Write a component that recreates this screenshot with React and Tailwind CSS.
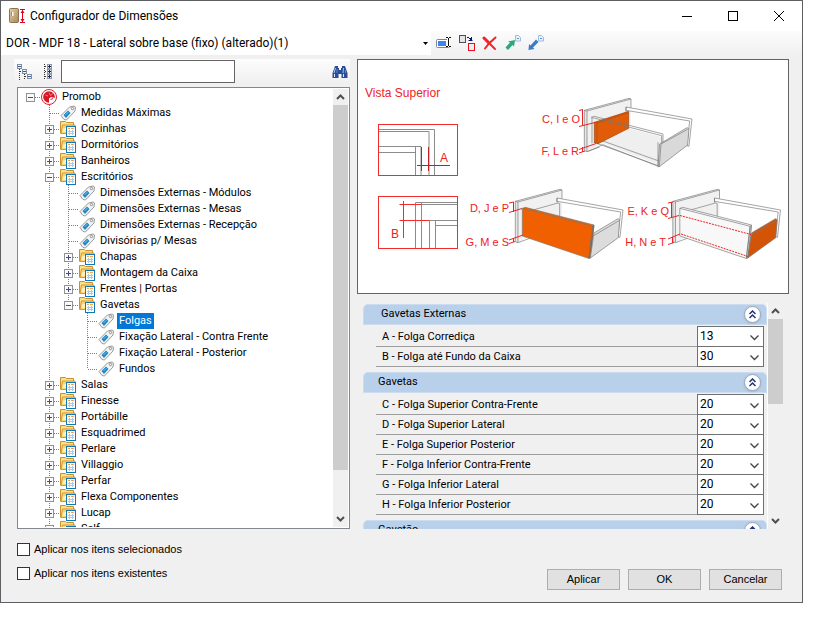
import React, { useState } from "react";

const folder = (name, children) => ({ name, type: "folder", children });
const tag = (name) => ({ name, type: "tag" });

const tree = {
  name: "Promob",
  type: "root",
  children: [
    tag("Medidas Máximas"),
    folder("Cozinhas"),
    folder("Dormitórios"),
    folder("Banheiros"),
    folder("Escritórios", [
      tag("Dimensões Externas - Módulos"),
      tag("Dimensões Externas - Mesas"),
      tag("Dimensões Externas - Recepção"),
      tag("Divisórias p/ Mesas"),
      folder("Chapas"),
      folder("Montagem da Caixa"),
      folder("Frentes | Portas"),
      folder("Gavetas", [
        tag("Folgas"),
        tag("Fixação Lateral - Contra Frente"),
        tag("Fixação Lateral - Posterior"),
        tag("Fundos"),
      ]),
    ]),
    folder("Salas"),
    folder("Finesse"),
    folder("Portábille"),
    folder("Esquadrimed"),
    folder("Perlare"),
    folder("Villaggio"),
    folder("Perfar"),
    folder("Flexa Componentes"),
    folder("Lucap"),
    folder("Self"),
  ],
};

const sections = [
  {
    title: "Gavetas Externas",
    fields: [
      ["A - Folga Corrediça", "13"],
      ["B - Folga até Fundo da Caixa", "30"],
    ],
  },
  {
    title: "Gavetas",
    fields: [
      ["C - Folga Superior Contra-Frente", "20"],
      ["D - Folga Superior Lateral", "20"],
      ["E - Folga Superior Posterior", "20"],
      ["F - Folga Inferior Contra-Frente", "20"],
      ["G - Folga Inferior Lateral", "20"],
      ["H - Folga Inferior Posterior", "20"],
    ],
  },
  { title: "Gavetão", fields: [] },
];

/* ---------- icons ---------- */

const AppIcon = () => (
  <svg width="18" height="16" viewBox="0 0 18 16">
    <defs>
      <linearGradient id="door" x1="0" y1="0" x2="1" y2="1">
        <stop offset="0" stopColor="#e6cda6" />
        <stop offset="1" stopColor="#a8875c" />
      </linearGradient>
    </defs>
    <rect x="0.5" y="0.5" width="9" height="14" rx="1" fill="url(#door)" stroke="#8a7355" />
    <path d="M3.5 4v4" stroke="#fff" strokeWidth="2" />
    <path d="M2.5 4v4" stroke="#8f8f8f" />
    <path d="M11 1.5h5M11 14.5h5" stroke="#e2001a" />
    <path d="M13.5 2v12" stroke="#e2001a" />
    <path d="M11.5 5l2-3 2 3zM11.5 11l2 3 2-3z" fill="#e2001a" />
  </svg>
);

const RenameIcon = () => (
  <svg width="16" height="16" viewBox="0 0 16 16">
    <rect x="0.5" y="4.5" width="13" height="8" rx="1" fill="#fff" stroke="#7c86a0" />
    <rect x="2" y="6" width="8" height="5" fill="#3f84ee" />
    <path d="M12.5 3v8" stroke="#fff" strokeWidth="3" />
    <path d="M10 2.5h2M13 2.5h2M10 11.5h2M13 11.5h2M12.5 3v8" stroke="#111" />
  </svg>
);

const ReplaceIcon = () => (
  <svg width="17" height="16" viewBox="0 0 17 16">
    <rect x="0.5" y="0.5" width="6" height="7" fill="#e4e4ea" stroke="#5b4a52" />
    <rect x="9.5" y="8.5" width="6" height="7" fill="#ececf4" stroke="#e8101c" />
    <path d="M8 2.5h2M10 3.5h2M12.5 2v4M9.5 5.5h4M11 4.5h2" stroke="#10107a" />
  </svg>
);

const DeleteIcon = () => (
  <svg width="16" height="16" viewBox="0 0 16 16" fill="none" strokeLinecap="round">
    <path d="M2 3l4 4 7 7" stroke="#f0242a" strokeWidth="2" />
    <path d="M2 3l4.500 4.500" stroke="#f0242a" strokeWidth="3" />
    <path d="M13.5 2.500L7 8.500 3 13.500" stroke="#f0242a" strokeWidth="2" />
  </svg>
);

const MiniPage = () => (
  <g>
    <path d="M10.5 0.5h3l2 2v3.500h-5z" fill="#e9f2fc" stroke="#9dbbe2" />
    <path d="M12 3.500h2" stroke="#5d92d6" />
  </g>
);

const ExportIcon = () => (
  <svg width="16" height="16" viewBox="0 0 16 16">
    <MiniPage />
    <path d="M0.500 12.500l4.500-5L3 6.500l7-1.500-1 6.500-1.500-1.500-4.500 5z" fill="#2fa57b" />
  </svg>
);

const ImportIcon = () => (
  <svg width="16" height="16" viewBox="0 0 16 16">
    <MiniPage />
    <path d="M0.500 15l0.500-6 1.500 1.500 5.500-6 2.500 2.500-5.500 5.500 1.500 1.500z" fill="#3b7bc8" />
  </svg>
);

const CollapseIcon = () => (
  <svg width="16" height="16" viewBox="0 0 16 16" shapeRendering="crispEdges">
    <path d="M2.500 5v11M7.500 10v6" stroke="#333" strokeDasharray="1 1" />
    <path d="M3 7.500h3M8 12.500h3" stroke="#333" strokeDasharray="1 1" />
    <g fill="#f4f8fc" stroke="#7e8ea4">
      <rect x="0.500" y="0.500" width="4" height="4" />
      <rect x="5.500" y="5.500" width="4" height="4" />
      <rect x="10.500" y="10.500" width="4" height="4" />
    </g>
    <path d="M1 2.500h3M6 7.500h3M11 12.500h3" stroke="#3a5a94" />
  </svg>
);

const ExpandIcon = () => (
  <svg width="10" height="16" viewBox="0 0 10 16" shapeRendering="crispEdges">
    <path d="M1.500 0v16" stroke="#333" strokeDasharray="1 1" />
    <path d="M2 2.500h3M2 7.500h3M2 12.500h3" stroke="#333" strokeDasharray="1 1" />
    <g fill="#e8eef6" stroke="#8c98ac">
      <rect x="4.500" y="0.500" width="4" height="4" />
      <rect x="4.500" y="5.500" width="4" height="4" />
      <rect x="4.500" y="10.500" width="4" height="4" />
    </g>
    <path d="M5 2.500h3M5 7.500h3M5 12.500h3M6.500 1v3M6.500 6v3M6.500 11v3" stroke="#222b45" />
  </svg>
);

const SearchIcon = () => (
  <svg width="16" height="14" viewBox="0 0 16 14">
    <path d="M3 1h3v2h1v2h2V3h1V1h3l1 3 1.500 4v5H9.500V9h-3v4H0.500V8L2 4z" fill="#2a4d96" />
    <path d="M3.500 3L2 8M11.500 3L11 8" stroke="#a9c4f2" />
    <path d="M2.500 9v3M11.500 9v3" stroke="#dce8fb" />
    <path d="M5 4v4M13.500 5v3" stroke="#5f86cf" />
  </svg>
);

const RootIcon = () => (
  <svg width="16" height="16" viewBox="0 0 16 16">
    <circle cx="8" cy="8" r="7.500" fill="#fff" stroke="#dc1f2e" />
    <circle cx="8" cy="8" r="5.800" fill="#d81626" />
    <path d="M8 3.500l1.500 3 2.500-2M4.500 6l2.500 1" stroke="#f0a0a6" fill="none" strokeWidth="0.800" />
    <path d="M8 14V9.500L10 8l4 1-1 3-3 2z" fill="#fff" />
    <path d="M9.500 10.500l2.500-1" stroke="#d81626" />
  </svg>
);

const TagIcon = () => (
  <svg width="16" height="16" viewBox="0 0 16 16">
    <path d="M1 10.500L9.500 2l4.500-1 1.500 1-0.500 4-8.500 9-2.500-0.500z" fill="#f3f3f3" stroke="#9a9a9a" />
    <path d="M3.500 10l4.500-4.500 2.500 2.500-4.500 5z" fill="#1d86c9" />
    <path d="M5.500 10l3-3" stroke="#6fc0ee" />
    <circle cx="12.500" cy="3.500" r="1.200" fill="#fff" stroke="#8b8b8b" />
  </svg>
);

const FolderIcon = () => (
  <svg width="16" height="16" viewBox="0 0 16 16">
    <path d="M0.500 12.500v-12h5l1 1h7v5" fill="#fbe08c" stroke="#c9902f" />
    <path d="M1 12.500l1.500-8.500h12.500v8.500z" fill="#fbd56c" stroke="#d49a35" />
    <path d="M2.500 11l1-4h3v4z" fill="#fdf0c0" />
    <rect x="6.500" y="5.500" width="9" height="10" fill="#fff" stroke="#1278b8" />
    <path d="M8 7.500h2M11 7.500h3" stroke="#f5a53c" fill="none" />
    <path d="M8 10.500h6M8 12.500h6M9.500 9v5M12.500 9v5" stroke="#a3cbea" />
  </svg>
);

const icons = { root: RootIcon, tag: TagIcon, folder: FolderIcon };

const Chevron = ({ up }) => (
  <svg width="9" height="6" viewBox="0 0 9 6" fill="none" stroke="#505050" strokeWidth="2">
    <path d={up ? "M1 5l3.500-3.500L8 5" : "M1 1l3.500 3.500L8 1"} />
  </svg>
);

/* ---------- tree ---------- */

// One 19px wide cell of the dotted guide lines
const Guide = ({ up, down, branch, box }) => (
  <svg width="19" height="16" viewBox="0 0 19 16" shapeRendering="crispEdges" className="shrink-0">
    <g stroke="#7d7d7d" strokeDasharray="1 1">
      {up && <path d="M9.500 0v8" />}
      {down && <path d="M9.500 8v8" />}
      {branch && <path d="M10 8.500h9" />}
    </g>
    {box && (
      <g>
        <rect x="5.500" y="4.500" width="8" height="8" rx="1" fill="#fafafa" stroke="#919191" />
        <path d={box === "minus" ? "M7 8.500h5" : "M7 8.500h5M9.500 6v5"} stroke="#3b4f91" />
      </g>
    )}
  </svg>
);

const TreeNode = ({ node, trail = [], last = true, selected, onSelect }) => {
  const Icon = icons[node.type];
  const isRoot = node.type === "root";
  const box = node.type === "tag" ? null : node.children ? "minus" : "plus";

  return (
    <li role="treeitem" aria-selected={selected === node.name}>
      <div className="flex h-4 items-center">
        {trail.map((line, i) => (
          <Guide key={i} up={line} down={line} />
        ))}
        <Guide up={!isRoot} down={!last} branch box={box} />
        <span className="ml-px shrink-0">
          <Icon />
        </span>
        <button
          onClick={() => onSelect(node.name)}
          className={`ml-[3px] h-4 px-[2px] leading-4 whitespace-nowrap ${
            selected === node.name ? "bg-[#0078d7] text-white" : ""
          }`}
        >
          {node.name}
        </button>
      </div>
      {node.children && (
        <ul role="group">
          {node.children.map((child, i) => (
            <TreeNode
              key={child.name}
              node={child}
              trail={[...trail, !last]}
              last={i === node.children.length - 1}
              selected={selected}
              onSelect={onSelect}
            />
          ))}
        </ul>
      )}
    </li>
  );
};

const ScrollBar = ({ children }) => (
  <div className="flex w-[15px] shrink-0 flex-col bg-[#f0f0f0]">
    <button aria-label="Rolar para cima" className="flex h-4 items-center justify-center">
      <Chevron up />
    </button>
    <div className="min-h-0 flex-1">{children}</div>
    <button aria-label="Rolar para baixo" className="flex h-4 items-center justify-center">
      <Chevron />
    </button>
  </div>
);

/* ---------- diagram ---------- */

const Drawer = ({ x, y, open, frontFill, frontEdge, endFill }) => (
  <g transform={`translate(${x} ${y}) scale(0.3333)`} stroke="#777" strokeWidth="2" strokeLinejoin="round">
    <path d="M166 79L300 43l6 2v75L178 202l-12-2z" fill="#f1f1f1" stroke="none" />
    <path d="M166 79l8 2v122l-8-3z" fill="#e6e6e6" />
    <path d="M166 79L300 43l6 2L174 81M306 45v26M174 203l38-14" fill="none" />
    <path d="M291 69l198 36-9 82-6-2 8-74-191-32z" fill="#fff" />
    <path d="M291 69v14" />
    {open ? (
      <g>
        <path d="M215 175l85-42 100 27-10 82z" fill="#efefef" stroke="none" />
        <path d="M195 175l195 71M205 165l185 66" fill="none" />
        <path d="M196 115l103-33v51l-92 46-11-4z" fill="#e05c08" stroke="#97420c" />
        <path d="M204 117v60M196 115l8 2 95-31" fill="none" stroke="#b04c0a" />
        <path d="M187 100l9-3 206 53v29M187 100l211 55v24M189 101v77" fill="none" />
        <path d="M178 202l44-20 168 66" fill="none" />
      </g>
    ) : (
      <g>
        <path d="M215 106l79-22 5 2v40" fill="#f0f0f0" />
        <path d="M187 100l9-3 206 53-11 99-6 1-198-67z" fill={frontFill} stroke="#777" />
        <path d="M398 154l4-4-11 99-5 1z" fill={frontEdge} />
        <path d="M187 100l211 54-11 95" fill="none" />
      </g>
    )}
    <path
      d={open ? "M392 180l82-49 6 3-4 49-86 66-3-2z" : "M402 174l72-43 5 3-4 54-84 61z"}
      fill={endFill}
    />
    {open && <path d="M387 175v72M396 180l80-44M396 180l-5 68" fill="none" />}
    {!open && <path d="M401 182l76-45" fill="none" />}
  </g>
);

const Diagram = () => (
  <svg viewBox="358 60 430 233" className="h-full w-full" role="img" aria-label="Vista Superior">
    <g fill="none" stroke="#8c8c8c">
      <path d="M379 129.500h55.500v46M379 131.500h50v44" />
      <path d="M379 146.500h42v29M379 152.500h36.500M415.500 147v28" />
      <path d="M457 202.500h-41.500v46M457 204.500h-36M421.500 203v45" />
      <path d="M457 220.500h-27.500v28M457 225.500h-22M435.500 221v27" />
    </g>
    <g fill="none" stroke="#f02c2c">
      <rect x="378.500" y="124.500" width="79" height="51" />
      <rect x="378.500" y="196.500" width="79" height="52" />
      <path d="M421.500 147v24M428.500 147v24M417 165.500h33" stroke="#c22020" />
      <path d="M399.500 204.500h22M399.500 220.500h30M403.500 201v37" />
    </g>

    <Drawer x={529} y={84} open endFill="#d9d9d9" />
    <Drawer x={460} y={175} frontFill="#f06000" frontEdge="#b84c08" endFill="#dcdcdc" />
    <Drawer x={617.5} y={175} frontFill="#f8f8f8" frontEdge="#e2e2e2" endFill="#d35407" />

    <g fill="none" stroke="#ee2222">
      <path d="M579 110.500l4-1M582.500 110v16M579 126.500l16-4" />
      <path d="M579 149.500l17-6M582.500 147v5M579 153l6-2" />
      <path d="M509 203l5-1M513.500 202v10M509 212.500l13-4" />
      <path d="M509 240l14-5M513.500 238v4M509 243.500l6-2" />
      <path d="M668 203l5-1M671.500 202v16M668 218.500l11-3" />
      <path d="M668 239l12-5M672.500 237v6M668 244.500l6-2" />
      <path d="M680 215.500l71 19M681 234l67 22.500" strokeDasharray="2 1" />
    </g>

    <g fill="#ee2222" fontFamily="Liberation Sans, Arial, sans-serif">
      <g fontSize="12">
        <text x="365" y="97">Vista Superior</text>
        <text x="440" y="162">A</text>
        <text x="391" y="238">B</text>
      </g>
      <g fontSize="11" textAnchor="end">
        <text x="580" y="123">C, I e O</text>
        <text x="579" y="155">F, L e R</text>
        <text x="509" y="212">D, J e P</text>
        <text x="509" y="246">G, M e S</text>
        <text x="669" y="215">E, K e Q</text>
        <text x="666" y="246">H, N e T</text>
      </g>
    </g>
  </svg>
);

/* ---------- properties ---------- */

const Section = ({ section, first }) => (
  <section className="mb-[5px]">
    <div
      className={`flex h-[21px] items-center justify-between rounded-t-[5px] border border-[#cbdcf0] bg-[#b9d0eb] pr-[5px] ${
        first ? "pl-[17px]" : "pl-[14px]"
      }`}
    >
      <h2>{section.title}</h2>
      <button
        aria-label={`Recolher ${section.title}`}
        className="flex h-[17px] w-[17px] items-center justify-center rounded-full border border-[#98a5bd] bg-white shadow-sm"
      >
        <svg width="7" height="9" viewBox="0 0 7 9" fill="none" stroke="#1d3576" strokeWidth="1.500">
          <path d="M0.500 4l3-3 3 3M0.500 8l3-3 3 3" />
        </svg>
      </button>
    </div>
    <div className="mt-px mr-[3px] ml-[13px]">
      {section.fields.map(([label, value], i) => {
        const id = label.charAt(0) + "-folga";
        return (
          <div key={label} className="flex">
            <label
              htmlFor={id}
              className={`flex-1 border-b border-[#9d9d9d] pl-[6px] ${
                i === 0 ? "h-[21px] leading-[22px]" : "h-5 leading-5"
              }`}
            >
              {label}
            </label>
            <div
              className={`relative w-[67px] border-x border-b border-[#707070] bg-white ${
                i === 0 ? "h-[21px] border-t" : "h-5"
              }`}
            >
              <select
                id={id}
                defaultValue={value}
                className="block h-[18px] w-full appearance-none bg-transparent pl-[2px] text-[12px] leading-[18px] outline-none"
              >
                <option>{value}</option>
              </select>
              <svg
                width="9"
                height="6"
                viewBox="0 0 9 6"
                fill="none"
                stroke="#444"
                strokeWidth="1.300"
                className="pointer-events-none absolute top-2 right-1"
              >
                <path d="M0.500 0.500l4 4 4-4" />
              </svg>
            </div>
          </div>
        );
      })}
    </div>
  </section>
);

const toolbar = [
  ["Renomear", RenameIcon],
  ["Substituir", ReplaceIcon],
  ["Excluir", DeleteIcon],
  ["Exportar", ExportIcon],
  ["Importar", ImportIcon],
];

const App = () => {
  const [selected, setSelected] = useState("Folgas");

  return (
    <div className="h-screen bg-white pr-[25px] pb-5 font-[Roboto,Arial,sans-serif] text-[11px] text-black">
      <div className="flex h-full flex-col border border-[#5f5f63] bg-[#f0f0f0]">
        <header className="flex h-[30px] shrink-0 items-center bg-white pl-2">
          <AppIcon />
          <h1 className="ml-[3px] flex-1 text-[12px]">Configurador de Dimensões</h1>
          <button aria-label="Minimizar" className="flex h-full w-[46px] items-center justify-center">
            <svg width="10" height="10" viewBox="0 0 10 10" stroke="#000">
              <path d="M0 5.500h10" />
            </svg>
          </button>
          <button aria-label="Maximizar" className="flex h-full w-[46px] items-center justify-center">
            <svg width="10" height="10" viewBox="0 0 10 10" fill="none" stroke="#000">
              <rect x="0.500" y="0.500" width="9" height="9" />
            </svg>
          </button>
          <button aria-label="Fechar" className="flex h-full w-[46px] items-center justify-center">
            <svg width="10" height="10" viewBox="0 0 10 10" stroke="#000">
              <path d="M0 0l10 10M10 0L0 10" />
            </svg>
          </button>
        </header>

        <div className="flex h-6 shrink-0 items-center gap-[7px] bg-linear-to-b from-[#fcfcfc] to-[#f0f0f0]">
          <div className="relative -mr-[2px] w-[430px] self-stretch">
            <select
              aria-label="Configuração"
              className="block h-full w-full appearance-none bg-white pl-[5px] text-[12px] outline-none"
            >
              <option>DOR - MDF 18 - Lateral sobre base (fixo) (alterado)(1)</option>
            </select>
            <svg width="5" height="3" viewBox="0 0 5 3" className="pointer-events-none absolute top-[11px] right-[3px]">
              <path d="M0 0h5L2.500 3z" fill="#000" />
            </svg>
          </div>
          {toolbar.map(([label, Icon]) => (
            <button key={label} aria-label={label} className="w-4">
              <Icon />
            </button>
          ))}
        </div>

        <main className="grid min-h-0 flex-1 grid-cols-[336fr_432fr] grid-rows-[minmax(0,1fr)] gap-[7px] px-[13px] pt-1">
          <div className="flex min-h-0 flex-col">
            <div className="flex h-[25px] shrink-0 items-center bg-linear-to-b from-[#fcfcfc] to-[#f0f0f0] pr-[2px] pl-[3px]">
              <button aria-label="Recolher tudo">
                <CollapseIcon />
              </button>
              <button aria-label="Expandir tudo" className="ml-[10px]">
                <ExpandIcon />
              </button>
              <input
                type="text"
                aria-label="Pesquisar"
                className="ml-2 h-[23px] w-[174px] border border-[#646464] bg-white px-1 outline-none"
              />
              <button aria-label="Localizar" className="ml-auto">
                <SearchIcon />
              </button>
            </div>
            <div className="mt-[3px] ml-[3px] flex min-h-0 flex-1 border border-[#828790] bg-white p-px">
              <ul role="tree" className="min-h-0 flex-1 overflow-hidden pl-[2px]">
                <TreeNode node={tree} selected={selected} onSelect={setSelected} />
              </ul>
              <ScrollBar>
                <div className="h-[90%] bg-[#cdcdcd]"></div>
              </ScrollBar>
            </div>
          </div>

          <div className="flex min-h-0 flex-col">
            <div className="h-[235px] shrink-0 border border-[#646464] bg-white">
              <Diagram />
            </div>
            <div className="mt-[9px] mr-[6px] ml-[6px] flex min-h-0 flex-1">
              <div className="min-h-0 flex-1 overflow-hidden pt-px">
                {sections.map((section, i) => (
                  <Section key={section.title} section={section} first={i === 0} />
                ))}
              </div>
              <div className="w-px bg-white"></div>
              <ScrollBar>
                <div className="h-[44%] bg-[#cdcdcd]"></div>
              </ScrollBar>
            </div>
          </div>
        </main>

        <footer className="flex shrink-0 items-end justify-between pt-3 pr-5 pb-3 pl-4 font-['Liberation_Sans',Arial,sans-serif]">
          <div className="flex flex-col gap-[7px] pb-2">
            {["Aplicar nos itens selecionados", "Aplicar nos itens existentes"].map((label) => (
              <label key={label} className="flex h-[17px] items-center gap-1">
                <input
                  type="checkbox"
                  className="h-[13px] w-[13px] appearance-none border border-[#333] bg-white checked:bg-[#0078d7]"
                />
                {label}
              </label>
            ))}
          </div>
          <div className="flex gap-2">
            {["Aplicar", "OK", "Cancelar"].map((label) => (
              <button key={label} className="h-[21px] w-[73px] border border-[#adadad] bg-[#e1e1e1]">
                {label}
              </button>
            ))}
          </div>
        </footer>
      </div>
    </div>
  );
};

export default App;
